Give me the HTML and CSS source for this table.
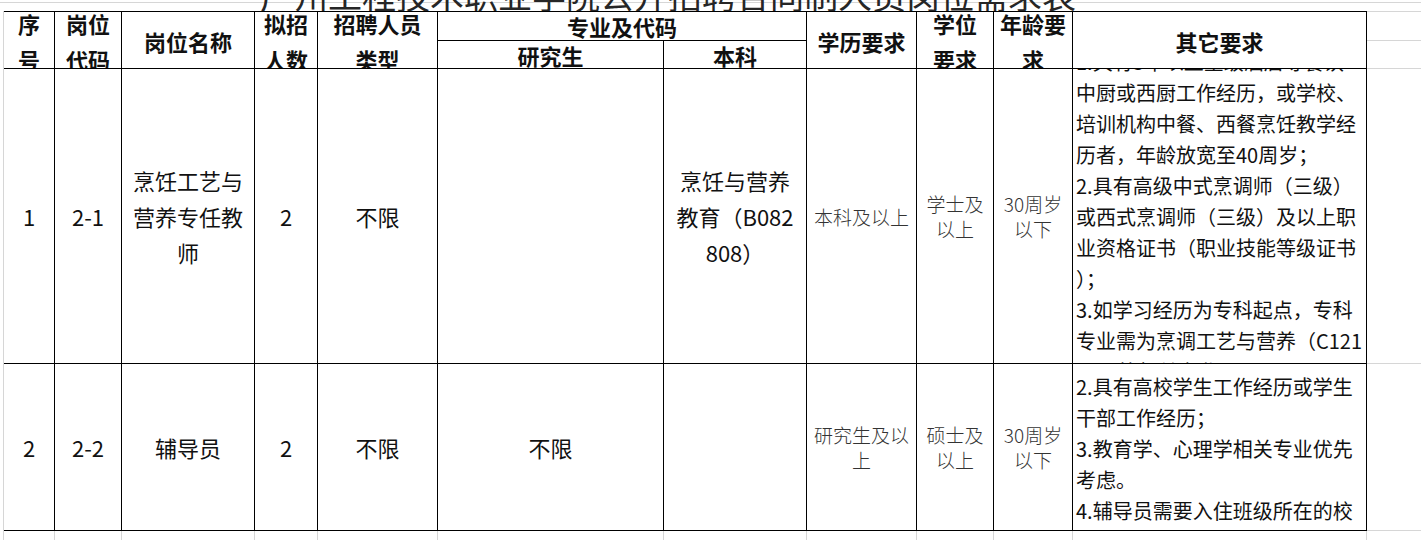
FILE: index.html
```html
<!DOCTYPE html>
<html lang="zh-CN">
<head>
<meta charset="utf-8">
<title>岗位需求表</title>
<link rel="stylesheet" href="styles.css">
</head>
<body>
<div class="sheet">
  <div class="title-strip">
    <span class="title">广州工程技术职业学院公开招聘合同制人员岗位需求表</span>
  </div>
  <div class="grid">
    <div class="cell head top r2"><div class="txt">序<br>号</div></div>
    <div class="cell head top r2"><div class="txt">岗位<br>代码</div></div>
    <div class="cell head top r2"><div class="txt">岗位名称</div></div>
    <div class="cell head top r2"><div class="txt">拟招<br>人数</div></div>
    <div class="cell head top r2"><div class="txt">招聘人员<br>类型</div></div>
    <div class="cell head top c2"><div class="txt">专业及代码</div></div>
    <div class="cell head top r2"><div class="txt">学历要求</div></div>
    <div class="cell head top r2"><div class="txt">学位<br>要求</div></div>
    <div class="cell head top r2"><div class="txt">年龄要<br>求</div></div>
    <div class="cell head top r2"><div class="txt">其它要求</div></div>
    <div class="cell extra top"></div>
    <div class="cell head sub"><div class="txt">研究生</div></div>
    <div class="cell head sub"><div class="txt">本科</div></div>
    <div class="cell extra"></div>

    <div class="cell body"><div class="txt">1</div></div>
    <div class="cell body"><div class="txt">2-1</div></div>
    <div class="cell body"><div class="txt">烹饪工艺与<br>营养专任教<br>师</div></div>
    <div class="cell body"><div class="txt">2</div></div>
    <div class="cell body"><div class="txt">不限</div></div>
    <div class="cell body"><div class="txt"></div></div>
    <div class="cell body"><div class="txt">烹饪与营养<br>教育（B082<br>808）</div></div>
    <div class="cell body soft"><div class="txt">本科及以上</div></div>
    <div class="cell body soft"><div class="txt">学士及<br>以上</div></div>
    <div class="cell body soft"><div class="txt">30周岁<br>以下</div></div>
    <div class="cell body notes"><div class="txt">
      <span>1.具有3年以上星级酒店等餐饮</span>
      <span>中厨或西厨工作经历，或学校、</span>
      <span>培训机构中餐、西餐烹饪教学经</span>
      <span>历者，年龄放宽至40周岁；</span>
      <span>2.具有高级中式烹调师（三级）</span>
      <span>或西式烹调师（三级）及以上职</span>
      <span>业资格证书（职业技能等级证书</span>
      <span>）；</span>
      <span>3.如学习经历为专科起点，专科</span>
      <span>专业需为烹调工艺与营养（C121</span>
      <span>02）等相关专业。</span>
    </div></div>
    <div class="cell extra"></div>

    <div class="cell body"><div class="txt">2</div></div>
    <div class="cell body"><div class="txt">2-2</div></div>
    <div class="cell body"><div class="txt">辅导员</div></div>
    <div class="cell body"><div class="txt">2</div></div>
    <div class="cell body"><div class="txt">不限</div></div>
    <div class="cell body"><div class="txt">不限</div></div>
    <div class="cell body"><div class="txt"></div></div>
    <div class="cell body soft"><div class="txt">研究生及以<br>上</div></div>
    <div class="cell body soft"><div class="txt">硕士及<br>以上</div></div>
    <div class="cell body soft"><div class="txt">30周岁<br>以下</div></div>
    <div class="cell body notes notes-top"><div class="txt">
      <span>2.具有高校学生工作经历或学生</span>
      <span>干部工作经历；</span>
      <span>3.教育学、心理学相关专业优先</span>
      <span>考虑。</span>
      <span>4.辅导员需要入住班级所在的校</span>
      <span>区。</span>
    </div></div>
    <div class="cell extra"></div>

    <div class="cell tail"></div>
    <div class="cell tail"></div>
    <div class="cell tail"></div>
    <div class="cell tail"></div>
    <div class="cell tail"></div>
    <div class="cell tail"></div>
    <div class="cell tail"></div>
    <div class="cell tail"></div>
    <div class="cell tail"></div>
    <div class="cell tail"></div>
    <div class="cell tail"></div>
    <div class="cell tail last"></div>
  </div>
</div>
</body>
</html>
```

FILE: styles.css
```css
html, body {
  margin: 0;
  padding: 0;
  background: #fff;
}

body {
  font-family: "Noto Sans CJK SC", "Noto Sans", sans-serif;
  color: #111;
  overflow: hidden;
  width: 1421px;
  height: 540px;
}

.sheet {
  width: 1421px;
  height: 540px;
  overflow: hidden;
}

.title-strip {
  height: 11px;
  overflow: hidden;
  display: flex;
  align-items: flex-end;
  padding-left: 260px;
  background:
    linear-gradient(#d6d6d6, #d6d6d6) 0 2px / 100% 1px no-repeat;
}

.title {
  font-size: 34px;
  line-height: 34px;
  white-space: nowrap;
  color: #262626;
  margin-bottom: -1px;
}

.grid {
  display: grid;
  grid-template-columns: 51px 67px 133px 63px 120px 226px 143px 110px 77px 79px 294px 54px;
  grid-template-rows: 30px 28px 295px 167px 20px;
  margin-left: 3px;
  border-left: 1px solid #d6d6d6;
}

.cell {
  box-sizing: border-box;
  border-right: 1px solid #000;
  border-bottom: 1px solid #000;
  overflow: hidden;
  display: flex;
  align-items: center;
  justify-content: center;
  min-width: 0;
  min-height: 0;
}

.cell.top {
  border-top: 1px solid #000;
}

.r2 { grid-row: span 2; }
.c2 { grid-column: span 2; }

.txt {
  text-align: center;
  white-space: nowrap;
}

.head .txt {
  font-weight: 700;
  font-size: 22px;
  line-height: 36px;
  color: #111;
}

.head.r2 {
  padding-top: 1px;
}

.body .txt {
  font-size: 22px;
  line-height: 36px;
  color: #111;
}

.body {
  padding-top: 0;
}

.soft {
  padding-top: 0;
}

.soft .txt {
  font-size: 19px;
  line-height: 25px;
  font-weight: 300;
  color: #333;
}

.notes {
  justify-content: flex-start;
  padding-left: 3px;
  padding-top: 1px;
}

.notes .txt {
  display: flex;
  flex-direction: column;
  text-align: left;
  font-size: 20px;
  line-height: 31px;
}

.notes-top {
  align-items: flex-start;
  padding-top: 7px;
}

.extra {
  border-right: none;
  border-bottom: 1px solid #d6d6d6;
}

.extra.top {
  border-top: 1px solid #d6d6d6;
}

.tail {
  border-bottom: none;
  border-right: 1px solid #d6d6d6;
}

.tail.last {
  border-right: none;
}
```
